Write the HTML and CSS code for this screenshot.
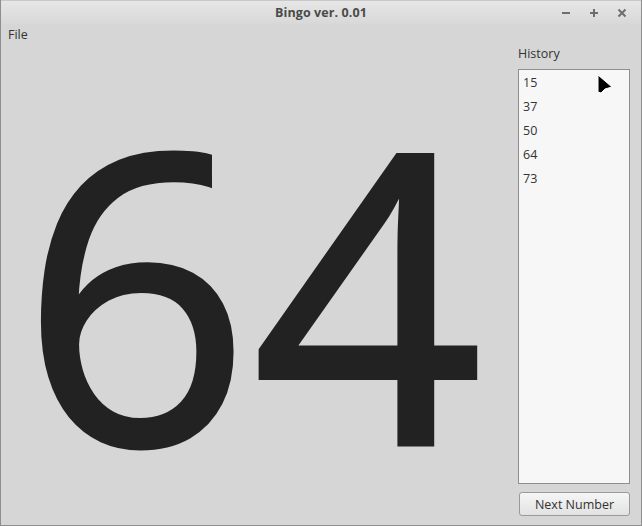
FILE: index.html
```html
<!DOCTYPE html>
<html>
<head>
<meta charset="utf-8">
<link rel="stylesheet" href="styles.css">
</head>
<body>
<div class="window">
  <div class="titlebar">
    <div class="title">Bingo ver. 0.01</div>
    <div class="controls">
      <svg width="10" height="10" viewBox="0 0 10 10"><rect x="1" y="4" width="8" height="2" fill="#6e6e6e"/></svg>
      <svg width="10" height="10" viewBox="0 0 10 10"><rect x="1" y="4" width="8" height="2" fill="#6e6e6e"/><rect x="4" y="1" width="2" height="8" fill="#6e6e6e"/></svg>
      <svg width="10" height="10" viewBox="0 0 10 10"><path d="M1.5 1.5 L8.5 8.5 M8.5 1.5 L1.5 8.5" stroke="#6e6e6e" stroke-width="2"/></svg>
    </div>
  </div>
  <div class="menubar"><span class="menu">File</span></div>
  <div class="content">
    <div class="display"><span class="number">64</span></div>
    <div class="side">
      <div class="label">History</div>
      <ul class="list">
        <li>15</li>
        <li>37</li>
        <li>50</li>
        <li>64</li>
        <li>73</li>
      </ul>
      <button class="btn">Next Number</button>
    </div>
  </div>
  <svg class="cursor" width="20" height="24" viewBox="0 0 20 24"><path d="M3 3 L3 20 L6 21 L10 17 L17 15 Z" fill="#000" stroke="#fff" stroke-width="1" stroke-linejoin="round"/></svg>
</div>
</body>
</html>
```

FILE: styles.css
```css
html, body { margin: 0; padding: 0; }
body { background: #d6d6d6; font-family: "Open Sans", "DejaVu Sans", sans-serif; }
.window {
  position: relative;
  width: 642px; height: 526px; box-sizing: border-box;
  border: 1px solid #8e8e8e; border-top: none;
  background: #d6d6d6;
  display: flex; flex-direction: column;
  overflow: hidden;
}
.titlebar {
  height: 24px; flex: none;
  background: linear-gradient(#e6e6e6, #d8d8d8);
  border-top: 1px solid #c8c8c8;
  box-sizing: border-box;
  display: flex; align-items: center; justify-content: center;
  position: relative;
}
.title { font-size: 12.5px; font-weight: 700; color: #4a4a4a; letter-spacing: 0.1px; }
.controls {
  position: absolute; right: 14px; top: 7px;
  display: flex; gap: 18px;
}
.menubar { height: 20px; flex: none; padding-left: 7px; display: flex; align-items: center; }
.menu { font-size: 12.5px; color: #333; }
.content { flex: 1; display: flex; min-height: 0; }
.display {
  flex: 1; display: flex; align-items: center; justify-content: center;
  padding-right: 14px; padding-top: 6px;
  overflow: hidden;
}
.number {
  font-size: 402px; line-height: 1; color: #222; letter-spacing: 2px;
  font-family: "Open Sans", sans-serif;
  -webkit-text-stroke: 5px #222;
}
.side {
  width: 112px; flex: none; margin-right: 11px;
  display: flex; flex-direction: column;
}
.label { font-size: 12.5px; color: #333; height: 25px; line-height: 19px; }
.list {
  flex: 1; margin: 0; padding: 4px 0 0 4px; list-style: none;
  background: #f7f7f7; border: 1px solid #8e8e8e;
}
.list li { font-size: 12.5px; color: #333; height: 24px; line-height: 18px; }
.btn {
  margin: 8px 0 9px 1px; width: 111px; height: 24px;
  font-family: "Open Sans", sans-serif; font-size: 12.5px; color: #333;
  background: linear-gradient(#f6f6f6, #e2e2e2);
  border: 1px solid #9a9a9a; border-radius: 3px;
  padding: 0;
}
.cursor { position: absolute; left: 594px; top: 72px; }
```
